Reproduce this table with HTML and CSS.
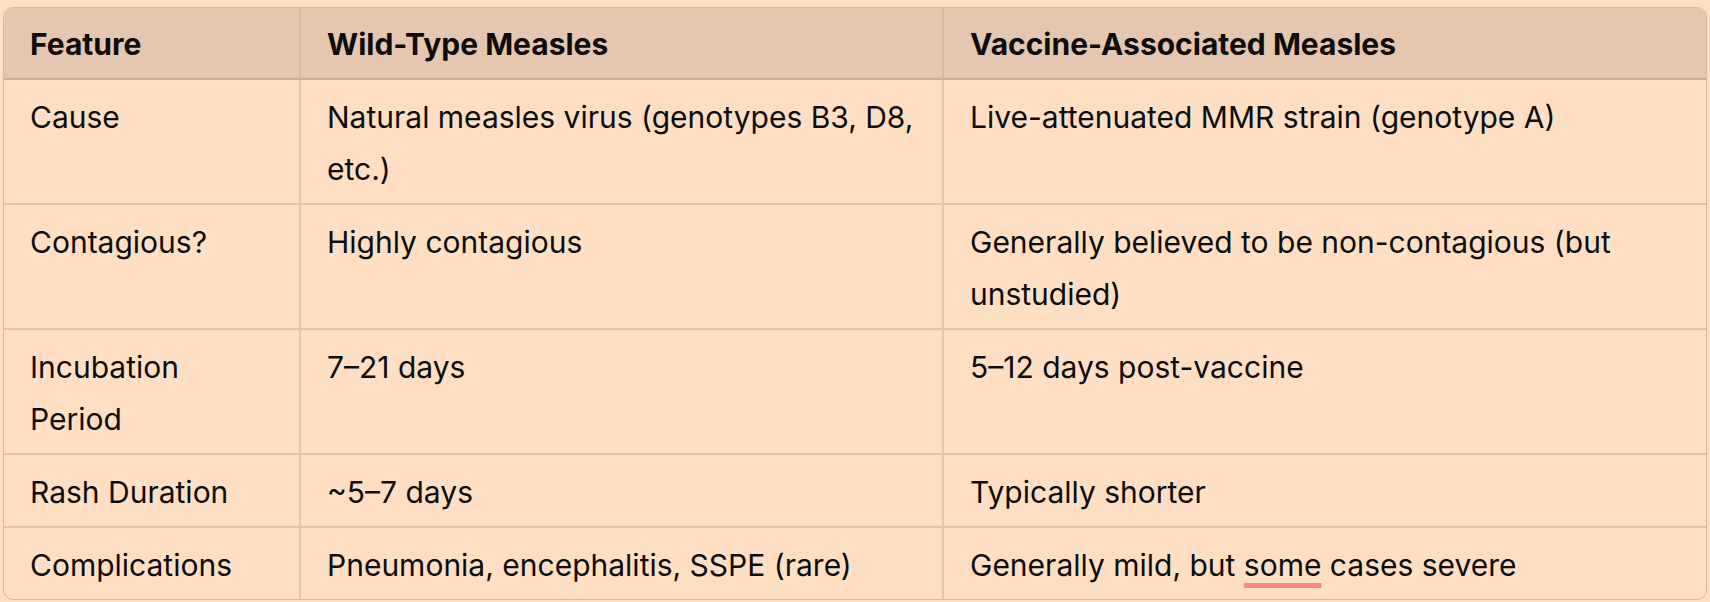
FILE: index.html
```html
<!DOCTYPE html>
<html lang="en">
<head>
<meta charset="utf-8">
<title>Measles comparison</title>
<link rel="stylesheet" href="styles.css">
</head>
<body>
<div class="table-wrap">
  <table class="cmp">
    <colgroup>
      <col class="c1">
      <col class="c2">
      <col class="c3">
    </colgroup>
    <thead>
      <tr>
        <th>Feature</th>
        <th>Wild-Type Measles</th>
        <th>Vaccine-Associated Measles</th>
      </tr>
    </thead>
    <tbody>
      <tr>
        <td>Cause</td>
        <td>Natural measles virus (genotypes B3, D8, etc.)</td>
        <td>Live-attenuated MMR strain (genotype A)</td>
      </tr>
      <tr>
        <td>Contagious?</td>
        <td>Highly contagious</td>
        <td>Generally believed to be non-contagious (but unstudied)</td>
      </tr>
      <tr>
        <td>Incubation Period</td>
        <td>7–21 days</td>
        <td>5–12 days post-vaccine</td>
      </tr>
      <tr>
        <td>Rash Duration</td>
        <td>~5–7 days</td>
        <td>Typically shorter</td>
      </tr>
      <tr>
        <td>Complications</td>
        <td>Pneumonia, encephalitis, SSPE (rare)</td>
        <td>Generally mild, but <span class="mark">some</span> cases severe</td>
      </tr>
    </tbody>
  </table>
</div>
</body>
</html>
```

FILE: styles.css
```css
html, body {
  margin: 0;
  padding: 0;
  background: #fedfc4;
}

body {
  padding: 7px 3px 0 3px;
  font-family: Inter, "Noto Sans", "Liberation Sans", sans-serif;
  color: #0d0d0d;
}

.table-wrap {
  border: 1px solid #d6b9a1;
  border-radius: 10px;
  overflow: hidden;
  width: 1702px;
}

.cmp {
  width: 100%;
  border-collapse: collapse;
  table-layout: fixed;
  font-size: 30px;
  line-height: 52px;
}

.c1 { width: 296px; }
.c2 { width: 643px; }
.c3 { width: auto; }

.cmp th,
.cmp td {
  text-align: left;
  vertical-align: top;
  padding: 11px 26px 8px 26px;
  border-right: 2px solid #e2c5ad;
  border-bottom: 2px solid #e2c5ad;
}

.cmp th:last-child,
.cmp td:last-child {
  border-right: none;
}

.cmp tbody tr:last-child td {
  border-bottom: none;
}

.cmp thead th {
  background: #e5c7b0;
  font-weight: 700;
  padding-top: 10px;
  padding-bottom: 8px;
  border-bottom: 2px solid #cdad95;
  border-right-color: #d6b9a1;
}

.mark {
  text-decoration: underline;
  text-decoration-color: #ff8a84;
  text-decoration-thickness: 5px;
  text-underline-offset: 7px;
}
```
